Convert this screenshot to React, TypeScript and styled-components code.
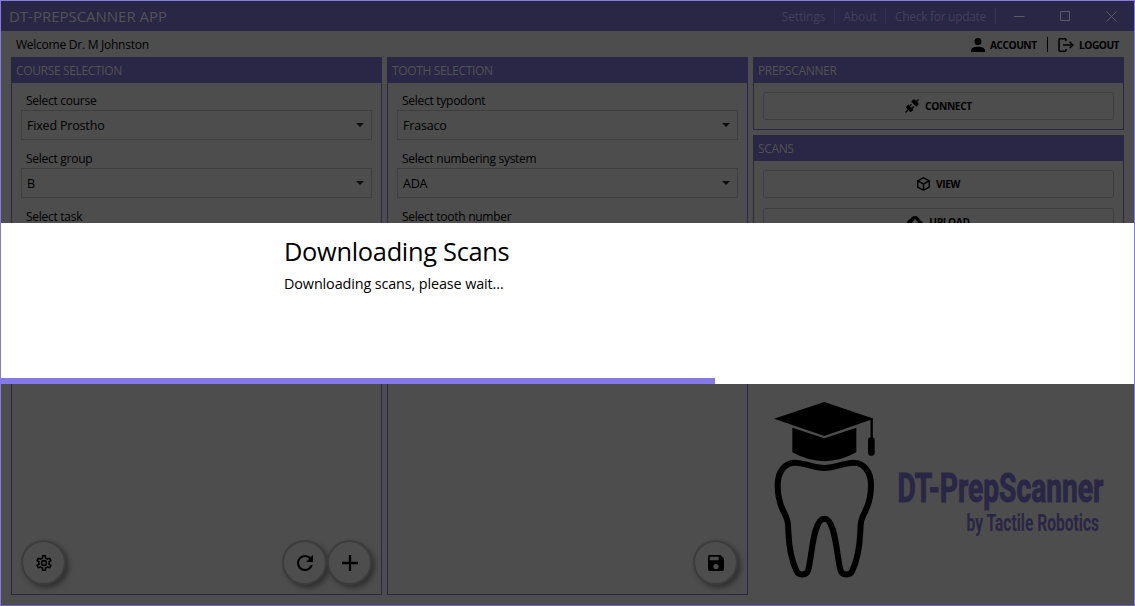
import React from "react";
import styled, { createGlobalStyle } from "styled-components";

const c = {
  accent: "#8579e5",
  bar: "#2a2645",
  page: "#4d4d4d",
  line: "#3e3e3e",
  heading: "#535353",
  menu: "#443f5f",
};

const GlobalStyle = createGlobalStyle`
  * { box-sizing: border-box; }
  body { margin: 0; background: ${c.page}; }
`;

const Window = styled.div`
  position: relative;
  width: 1135px;
  height: 606px;
  display: flex;
  flex-direction: column;
  border: 1px solid ${c.accent};
  border-bottom-color: #6a60b4;
  background: ${c.page};
  color: #000;
  font-family: "Open Sans", "Noto Sans", sans-serif;
  overflow: hidden;
`;

const Label = styled.span<{ $size?: number; $spacing?: number; $weight?: number }>`
  font-size: ${(p) => p.$size ?? 12}px;
  letter-spacing: ${(p) => p.$spacing ?? 0}px;
  font-weight: ${(p) => p.$weight ?? 400};
  line-height: 16px;
  white-space: nowrap;
`;

const TitleBar = styled.header`
  flex: none;
  height: 30px;
  display: flex;
  align-items: center;
  justify-content: space-between;
  padding-left: 8px;
  background: ${c.bar};
  color: ${c.heading};
`;

const TitleMenu = styled.nav`
  display: flex;
  align-items: center;
  color: ${c.menu};
`;

const MenuItem = styled.div<{ $width: number }>`
  width: ${(p) => p.$width}px;
  height: 16px;
  display: flex;
  align-items: center;
  justify-content: center;
  padding-top: 2px;
  border-right: 1px solid #37325a;
`;

const WindowButton = styled.div`
  width: 46px;
  height: 30px;
  display: flex;
  align-items: center;
  justify-content: center;
  color: #5c5a6b;
`;

const UserBar = styled.div`
  flex: none;
  height: 26px;
  display: flex;
  align-items: center;
  justify-content: space-between;
  padding: 1px 15px 0;
`;

const UserActions = styled.div`
  display: flex;
  align-items: center;
`;

const Action = styled.div`
  display: flex;
  align-items: center;
  gap: 5.5px;
`;

const Divider = styled.div`
  width: 1px;
  height: 15px;
  margin: 0 10px;
  background: #000;
`;

const Columns = styled.main`
  display: grid;
  grid-template-columns: 371px 361px 371px;
  column-gap: 5px;
  height: 538px;
  padding-left: 10px;
`;

const SideColumn = styled.div`
  display: flex;
  flex-direction: column;
  gap: 5px;
`;

const PanelBox = styled.section<{ $height?: number }>`
  flex: none;
  display: flex;
  flex-direction: column;
  height: ${(p) => (p.$height ? `${p.$height}px` : "auto")};
  border: 1px solid ${c.bar};
`;

const PanelTitle = styled.h2`
  flex: none;
  margin: 0;
  height: 25px;
  padding: 0 4px;
  display: flex;
  align-items: center;
  background: ${c.bar};
  color: ${c.heading};
`;

const PanelBody = styled.div`
  flex: 1;
  display: flex;
  flex-direction: column;
  padding: 9px;
`;

const Field = styled.div`
  height: 58px;
  display: flex;
  flex-direction: column;
`;

const FieldLabel = styled.div`
  height: 18px;
  padding: 0 0 1px 5px;
  display: flex;
  align-items: center;
`;

const Select = styled.div`
  height: 30px;
  display: flex;
  align-items: center;
  justify-content: space-between;
  padding: 1px 7px 0 5px;
  border: 1px solid ${c.line};
`;

const Caret = styled.i`
  width: 0;
  height: 0;
  margin-bottom: 1px;
  border: 4px solid transparent;
  border-top: 4px solid #0c0c0c;
  border-bottom: 0;
`;

const ButtonStack = styled.div`
  display: flex;
  flex-direction: column;
  gap: 10px;
`;

const Button = styled.div`
  height: 28px;
  display: flex;
  align-items: center;
  justify-content: center;
  gap: 6px;
  border: 1px solid ${c.line};
  border-radius: 3px;
`;

const Footer = styled.div`
  margin-top: auto;
  display: flex;
`;

const Spacer = styled.div`
  flex: 1;
`;

const RoundButton = styled.div`
  width: 45px;
  height: 45px;
  border-radius: 50%;
  border: 2px solid #3c3c3c;
  background: ${c.page};
  box-shadow: 3px 3px 5px rgba(0, 0, 0, 0.38);
  display: flex;
  align-items: center;
  justify-content: center;
`;

const LogoArea = styled.div`
  padding: 15px 12px 0;
`;

const Dialog = styled.div`
  position: absolute;
  left: 0;
  right: 0;
  top: 222px;
  height: 161px;
  display: flex;
  flex-direction: column;
  background: #fff;
`;

const DialogText = styled.div`
  flex: 1;
  padding: 11px 0 0 283px;
  display: flex;
  flex-direction: column;
`;

const DialogTitle = styled.div`
  height: 37px;
  font-size: 25.4px;
  line-height: 34px;
  letter-spacing: -0.3px;
`;

const DialogMessage = styled.div`
  font-size: 14.4px;
  line-height: 26px;
  letter-spacing: -0.12px;
`;

const Progress = styled.div`
  height: 6px;
  width: 714px;
  background: ${c.accent};
`;

type IconProps = { d: string; box?: string; w?: number; h?: number };

const Icon = ({ d, box = "2 2 20 20", w = 16, h = 16 }: IconProps) => (
  <svg width={w} height={h} viewBox={box} fill="#000" preserveAspectRatio="none">
    <path d={d} />
  </svg>
);

const paths = {
  person: "M12 4a4 4 0 0 1 4 4a4 4 0 0 1-4 4a4 4 0 0 1-4-4a4 4 0 0 1 4-4m0 10c4.42 0 8 1.79 8 4v2H4v-2c0-2.21 3.58-4 8-4Z",
  plug: "M21.4 7.5C22.2 8.3 22.2 9.6 21.4 10.3L18.6 13.1L10.8 5.3L13.6 2.5C14.4 1.7 15.7 1.7 16.4 2.5L18.2 4.3L21.2 1.3L22.6 2.7L19.6 5.7L21.4 7.5M15.6 13.3L14.2 11.9L11.4 14.7L9.3 12.6L12.1 9.8L10.7 8.4L7.9 11.2L6.4 9.8L3.6 12.6C2.8 13.4 2.8 14.7 3.6 15.4L5.4 17.2L1.4 21.2L2.8 22.6L6.8 18.6L8.6 20.4C9.4 21.2 10.7 21.2 11.4 20.4L14.2 17.6L12.8 16.2L15.6 13.3Z",
  cube: "M21,16.5C21,16.88 20.79,17.21 20.47,17.38L12.57,21.82C12.41,21.94 12.21,22 12,22C11.79,22 11.59,21.94 11.43,21.82L3.53,17.38C3.21,17.21 3,16.88 3,16.5V7.5C3,7.12 3.21,6.79 3.53,6.62L11.43,2.18C11.59,2.06 11.79,2 12,2C12.21,2 12.41,2.06 12.57,2.18L20.47,6.62C20.79,6.79 21,7.12 21,7.5V16.5M12,4.15L6.04,7.5L12,10.85L17.96,7.5L12,4.15M5,15.91L11,19.29V12.58L5,9.21V15.91M19,15.91V9.21L13,12.58V19.29L19,15.91Z",
  cloud: "M14,13V17H10V13H7L12,8L17,13M19.35,10.03C18.67,6.59 15.64,4 12,4C9.11,4 6.6,5.64 5.35,8.03C2.34,8.36 0,10.9 0,14A6,6 0 0,0 6,20H19A5,5 0 0,0 24,15C24,12.36 21.95,10.22 19.35,10.03Z",
  cog: "M12,8A4,4 0 0,1 16,12A4,4 0 0,1 12,16A4,4 0 0,1 8,12A4,4 0 0,1 12,8M12,10A2,2 0 0,0 10,12A2,2 0 0,0 12,14A2,2 0 0,0 14,12A2,2 0 0,0 12,10M10,22C9.75,22 9.54,21.82 9.5,21.58L9.13,18.93C8.5,18.68 7.96,18.34 7.44,17.94L4.95,18.95C4.73,19.03 4.46,18.95 4.34,18.73L2.34,15.27C2.21,15.05 2.27,14.78 2.46,14.63L4.57,12.97L4.5,12L4.57,11L2.46,9.37C2.27,9.22 2.21,8.95 2.34,8.73L4.34,5.27C4.46,5.05 4.73,4.96 4.95,5.05L7.44,6.05C7.96,5.66 8.5,5.32 9.13,5.07L9.5,2.42C9.54,2.18 9.75,2 10,2H14C14.25,2 14.46,2.18 14.5,2.42L14.87,5.07C15.5,5.32 16.04,5.66 16.56,6.05L19.05,5.05C19.27,4.96 19.54,5.05 19.66,5.27L21.66,8.73C21.79,8.95 21.73,9.22 21.54,9.37L19.43,11L19.5,12L19.43,13L21.54,14.63C21.73,14.78 21.79,15.05 21.66,15.27L19.66,18.73C19.54,18.95 19.27,19.04 19.05,18.95L16.56,17.95C16.04,18.34 15.5,18.68 14.87,18.93L14.5,21.58C14.46,21.82 14.25,22 14,22H10M11.25,4L10.88,6.61C9.68,6.86 8.62,7.5 7.85,8.39L5.44,7.35L4.69,8.65L6.8,10.2C6.4,11.37 6.4,12.64 6.8,13.8L4.68,15.36L5.43,16.66L7.86,15.62C8.63,16.5 9.68,17.14 10.87,17.38L11.24,20H12.76L13.13,17.39C14.32,17.14 15.37,16.5 16.14,15.62L18.57,16.66L19.32,15.36L17.2,13.81C17.6,12.64 17.6,11.37 17.2,10.2L19.31,8.65L18.56,7.35L16.15,8.39C15.38,7.5 14.32,6.86 13.12,6.62L12.75,4H11.25Z",
  refresh: "M17.65,6.35C16.2,4.9 14.21,4 12,4A8,8 0 0,0 4,12A8,8 0 0,0 12,20C15.73,20 18.84,17.45 19.73,14H17.65C16.83,16.33 14.61,18 12,18A6,6 0 0,1 6,12A6,6 0 0,1 12,6C13.66,6 15.14,6.69 16.22,7.78L13,11H20V4L17.65,6.35Z",
  plus: "M19,13H13V19H11V13H5V11H11V5H13V11H19V13Z",
  save: "M15,9H5V5H15M12,19A3,3 0 0,1 9,16A3,3 0 0,1 12,13A3,3 0 0,1 15,16A3,3 0 0,1 12,19M17,3H5C3.89,3 3,3.9 3,5V19A2,2 0 0,0 5,21H19A2,2 0 0,0 21,19V7L17,3Z",
};

const LogoutIcon = () => (
  <svg width="16" height="16" viewBox="0 0 16 16" fill="none" stroke="#000" strokeWidth="1.5">
    <path d="M8 4V2.8a1 1 0 0 0-1-1H2a1 1 0 0 0-1 1v10.4a1 1 0 0 0 1 1h5a1 1 0 0 0 1-1V12M5 8h9.6M11.6 4.8L14.8 8l-3.2 3.2" />
  </svg>
);

const Logo = () => (
  <svg width="348" height="190" viewBox="0 0 1044 570">
    <path d="M27 71L178 21L326 71L178 123Z" />
    <path d="M82 98L178 130L274 98V172Q178 225 82 172Z" />
    <path d="M320 71V132" stroke="#000" strokeWidth="7" />
    <rect x="309" y="127" width="20" height="55" rx="9" />
    <path
      d="M178 219C145 219 118 203 90 203C58 203 38 232 38 270C38 300 43 325 55 348C68 372 70 385 70 410C72 455 80 498 94 527C99 542 124 543 129 527C141 490 143 371 178 371C213 371 215 490 227 527C232 543 257 542 262 527C276 498 284 455 286 410C286 385 288 372 301 348C313 325 318 300 318 270C318 232 298 203 266 203C238 203 211 219 178 219Z"
      fill="none"
      stroke="#000"
      strokeWidth="18"
    />
    <g
      transform="scale(0.67 1)"
      fontFamily="Roboto, sans-serif"
      fontWeight="700"
      fill={c.bar}
      stroke={c.bar}
    >
      <text x="593" y="320" fontSize="122" strokeWidth="3" textLength="922" lengthAdjust="spacingAndGlyphs">DT-PrepScanner</text>
      <text x="902" y="407" fontSize="70" strokeWidth="0" textLength="594" lengthAdjust="spacingAndGlyphs">by Tactile Robotics</text>
    </g>
  </svg>
);

const ComboField = ({ label, value }: { label: string; value?: string }) => (
  <Field>
    <FieldLabel>
      <Label $spacing={-0.27}>{label}</Label>
    </FieldLabel>
    {value && (
      <Select>
        <Label $size={12.5} $spacing={-0.18}>{value}</Label>
        <Caret />
      </Select>
    )}
  </Field>
);

const Panel = ({ title, height, children }: { title: string; height?: number; children: React.ReactNode }) => (
  <PanelBox $height={height}>
    <PanelTitle>
      <Label $spacing={-0.35}>{title}</Label>
    </PanelTitle>
    <PanelBody>{children}</PanelBody>
  </PanelBox>
);

const Caps = ({ children, tight }: { children: string; tight?: boolean }) => (
  <Label $size={10.2} $weight={700} $spacing={tight ? -0.5 : -0.35}>{children}</Label>
);

export default function App() {
  return (
    <>
      <GlobalStyle />
      <Window>
        <TitleBar>
          <Label $size={15} $spacing={-0.02}>DT-PREPSCANNER APP</Label>
          <TitleMenu>
            <MenuItem $width={62}><Label $spacing={-0.15}>Settings</Label></MenuItem>
            <MenuItem $width={51}><Label $spacing={-0.1}>About</Label></MenuItem>
            <MenuItem $width={110}><Label $spacing={-0.3}>Check for update</Label></MenuItem>
            <WindowButton>
              <svg width="11" height="11" stroke="currentColor"><path d="M0 5.5H10.5" /></svg>
            </WindowButton>
            <WindowButton>
              <svg width="11" height="11" stroke="currentColor" fill="none"><path d="M.5 .5H9.5V9.5H.5Z" /></svg>
            </WindowButton>
            <WindowButton>
              <svg width="11" height="11" stroke="currentColor"><path d="M.5 .5L10.5 10.5M10.5 .5L.5 10.5" /></svg>
            </WindowButton>
          </TitleMenu>
        </TitleBar>
        <UserBar>
          <Label $spacing={-0.25}>Welcome Dr. M Johnston</Label>
          <UserActions>
            <Action><Icon d={paths.person} box="4 4 16 16" w={14} h={14} /><Caps tight>ACCOUNT</Caps></Action>
            <Divider />
            <Action><LogoutIcon /><Caps tight>LOGOUT</Caps></Action>
          </UserActions>
        </UserBar>
        <Columns>
          <Panel title="COURSE SELECTION">
            <ComboField label="Select course" value="Fixed Prostho" />
            <ComboField label="Select group" value="B" />
            <ComboField label="Select task" />
            <Footer>
              <RoundButton><Icon d={paths.cog} /></RoundButton>
              <Spacer />
              <RoundButton><Icon d={paths.refresh} box="4 4 16 16" /></RoundButton>
              <RoundButton><Icon d={paths.plus} box="5 5 14 14" /></RoundButton>
            </Footer>
          </Panel>
          <Panel title="TOOTH SELECTION">
            <ComboField label="Select typodont" value="Frasaco" />
            <ComboField label="Select numbering system" value="ADA" />
            <ComboField label="Select tooth number" />
            <Footer>
              <Spacer />
              <RoundButton><Icon d={paths.save} box="3 3 18 18" /></RoundButton>
            </Footer>
          </Panel>
          <SideColumn>
            <Panel title="PREPSCANNER" height={73}>
              <Button><Icon d={paths.plug} box="1.4 1.3 21.2 21.3" w={14} h={14} /><Caps>CONNECT</Caps></Button>
            </Panel>
            <Panel title="SCANS" height={240}>
              <ButtonStack>
                <Button><Icon d={paths.cube} box="3 2 18 20" w={13} h={14} /><Caps>VIEW</Caps></Button>
                <Button><Icon d={paths.cloud} box="0 4 24 16" w={16} h={12} /><Caps>UPLOAD</Caps></Button>
              </ButtonStack>
            </Panel>
            <LogoArea><Logo /></LogoArea>
          </SideColumn>
        </Columns>
        <Dialog>
          <DialogText>
            <DialogTitle>Downloading Scans</DialogTitle>
            <DialogMessage>Downloading scans, please wait...</DialogMessage>
          </DialogText>
          <Progress />
        </Dialog>
      </Window>
    </>
  );
}
